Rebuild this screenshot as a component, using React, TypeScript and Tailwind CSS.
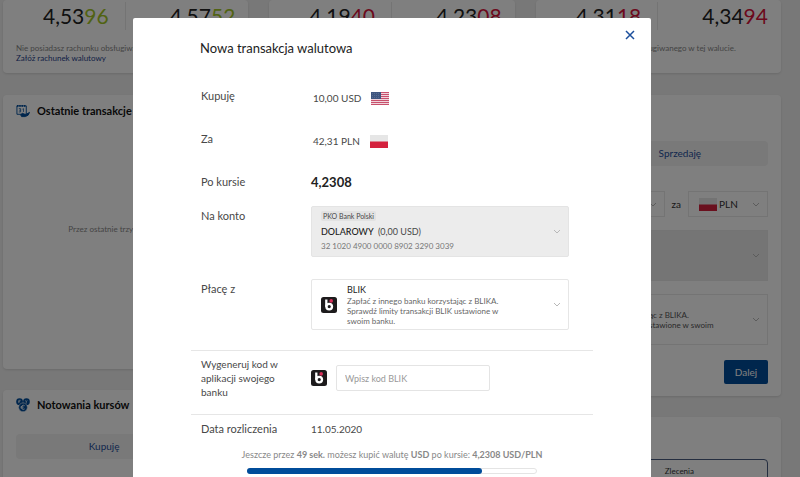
import { useState } from "react";
import type { ReactNode } from "react";

const rateCards = [
  { left: ["4,53", "96"], right: ["4,57", "52"], color: "text-[#a3c626]" },
  { left: ["4,19", "40"], right: ["4,23", "08"], color: "text-[#d8123a]" },
  { left: ["4,31", "18"], right: ["4,34", "94"], color: "text-[#d8123a]" },
];

function Chevron() {
  return (
    <svg viewBox="0 0 8 5" className="w-2 h-[5px] shrink-0" fill="none" stroke="#b8b8b8" aria-hidden="true">
      <path d="M1 1l3 3 3-3" />
    </svg>
  );
}

function FlagPl() {
  return (
    <svg viewBox="0 0 18 13" className="w-[18px] h-[13px] shrink-0" role="img" aria-label="Polska">
      <rect width="18" height="13" fill="#e6e6e6" />
      <rect y="6.5" width="18" height="6.5" fill="#d4213d" />
    </svg>
  );
}

function FlagUs() {
  return (
    <svg viewBox="0 0 18 13" className="w-[18px] h-[13px] shrink-0" role="img" aria-label="USA">
      <rect width="18" height="13" fill="#f0d3db" />
      {[0, 2, 4, 6, 8, 10, 12].map((y) => (
        <rect key={y} y={y} width="18" height="1" fill="#c8506c" />
      ))}
      <rect width="10" height="7" fill="#3f5680" />
      <path d="M1 1.5h8M1 3.5h8M1 5.5h8" stroke="#6f80a3" strokeWidth="0.5" strokeDasharray="1 1" />
    </svg>
  );
}

function BlikLogo() {
  return (
    <svg viewBox="0 0 16 16" className="size-4 shrink-0" role="img" aria-label="BLIK">
      <rect width="16" height="16" rx="2.5" fill="#1d1b1c" />
      <circle cx="8.2" cy="9.6" r="2.8" fill="none" stroke="#fff" strokeWidth="2.3" />
      <path d="M5.3 2.5v7.3" stroke="#fff" strokeWidth="2.3" />
      <circle cx="10.2" cy="3.9" r="1.8" fill="#d8315a" />
    </svg>
  );
}

function CalendarIcon() {
  return (
    <svg viewBox="0 0 15 14" className="w-3.5 h-3.5 shrink-0" fill="none" aria-hidden="true">
      <path d="M1 1.5h10v9H1z" stroke="#004c9a" />
      <path d="M1 1.5h10" stroke="#004c9a" strokeWidth="2" strokeDasharray="1.5 1" />
      <path d="M3 4.5h2v3.5H3M3.5 6.2H5M7 5l1-.5V8" stroke="#004c9a" strokeWidth="0.8" />
      <path d="M5 11l2-1.5 3 1.5 4.5-2.5-1.5 3-3 1.500H6z" fill="#004c9a" stroke="#004c9a" />
    </svg>
  );
}

function CoinsIcon() {
  return (
    <svg viewBox="0 0 15 15" className="size-3.5 shrink-0" fill="none" aria-hidden="true">
      <circle cx="3.8" cy="4" r="3.6" fill="#004c9a" />
      <circle cx="11.2" cy="4" r="3.6" fill="#004c9a" />
      <path d="M5 2.5H3v3M2.5 4h2M10 2.5l1 1.5 1-1.5M11 4v2" stroke="#fff" strokeWidth="0.7" />
      <circle cx="7.5" cy="10" r="4.7" fill="#004c9a" stroke="#fff" strokeWidth="0.6" />
      <path d="M9.300 8.300a2.200 2.200 0 1 0 0 3.400M5 9.500h3M5 10.600h3" stroke="#fff" strokeWidth="0.9" />
    </svg>
  );
}

function Card({ children, className }: { children: ReactNode; className?: string }) {
  return <section className={`bg-white rounded-sm shadow-sm px-[13px] ${className ?? ""}`}>{children}</section>;
}

function Tabs({ labels }: { labels: string[] }) {
  return (
    <div className="grid grid-cols-2 bg-[#f3f3f3] rounded-sm">
      {labels.map((label) => (
        <button key={label} type="button" className="h-[25px] text-[10px] text-[#1f4f9c]">
          {label}
        </button>
      ))}
    </div>
  );
}

function CurrencySelect({ value, label }: { value: string; label: string }) {
  return (
    <div className="relative flex-1 max-w-20 h-[26px] border border-[#e9e9e9] flex items-center gap-0.5 pl-2.5 pr-[7px]">
      {value === "PLN" ? <FlagPl /> : <FlagUs />}
      <select aria-label={label} defaultValue={value} className="appearance-none flex-1 min-w-0 text-[10px] text-[#333]">
        <option>{value}</option>
      </select>
      <Chevron />
    </div>
  );
}

function Dashboard() {
  return (
    <main className="h-screen overflow-hidden bg-[#f1f1f1] pl-[3px] pr-[19px]">
      <div className="grid grid-cols-3 gap-[21px]">
        {rateCards.map((card) => (
          <Card key={card.left[0]} className="pt-0.5 pb-2.5">
            <div className="grid grid-cols-2 divide-x divide-[#e9e9e9] text-[21px] leading-7 text-right text-[#222]">
              <p className="pr-4">
                {card.left[0]}
                <span className={card.color}>{card.left[1]}</span>
              </p>
              <p>
                {card.right[0]}
                <span className={card.color}>{card.right[1]}</span>
              </p>
            </div>
            <p className="mt-[13px] text-[8px] leading-[10px] text-[#888] whitespace-nowrap">
              Nie posiadasz rachunku obsługiwanego w tej walucie.
            </p>
            <a href="#rachunek" className="block text-[8px] leading-[10px] text-[#1f3f8c]">
              Załóż rachunek walutowy
            </a>
          </Card>
        ))}
      </div>

      <div className="mt-[22px] grid grid-cols-2 gap-[21px] items-start">
        <div className="flex flex-col gap-[21px]">
          <Card className="min-h-[274px] pt-1.5">
            <h2 className="flex items-center gap-[7px] text-[11px] leading-5 font-bold text-[#111]">
              <CalendarIcon />
              Ostatnie transakcje
            </h2>
            <p className="mt-[102px] text-center text-[8px] leading-3 text-[#888] whitespace-nowrap">
              Przez ostatnie trzy miesiące nie wykonano żadnej transakcji w serwisie.
            </p>
          </Card>
          <Card className="min-h-40 pt-[5px]">
            <h2 className="mb-[19px] flex items-center gap-[7px] text-[11px] leading-5 font-bold text-[#111]">
              <CoinsIcon />
              Notowania kursów
            </h2>
            <Tabs labels={["Kupuję", "Sprzedaję"]} />
          </Card>
        </div>

        <div className="flex flex-col gap-[21px]">
          <Card className="pt-[46px] pb-3">
            <Tabs labels={["Kupuję", "Sprzedaję"]} />
            <div className="mt-[25px] flex items-center justify-end gap-[7px] text-[10px] text-[#333]">
              <CurrencySelect value="USD" label="Waluta kupowana" />
              <span>za</span>
              <CurrencySelect value="PLN" label="Waluta płatności" />
            </div>
            <button
              type="button"
              aria-label="Wybierz konto"
              className="mt-[13px] w-full h-[51px] bg-[#ebebeb] border border-[#e8e8e8] flex items-center justify-end pr-[7px]"
            >
              <Chevron />
            </button>
            <button
              type="button"
              className="mt-[13px] w-full h-[51px] border border-[#e9e9e9] flex items-center justify-between pr-[7px] text-left"
            >
              <span className="pl-[121px] text-[8px] leading-[10px] text-[#555]">
                Zapłać z innego banku korzystając z BLIKA.
                <br />
                Sprawdź limity transakcji BLIK ustawione w swoim
              </span>
              <Chevron />
            </button>
            <div className="mt-[15px] flex justify-end">
              <button type="button" className="h-6 w-11 rounded-xs bg-[#004c9a] text-[10px] text-white">
                Dalej
              </button>
            </div>
          </Card>
          <Card className="pt-[42px]">
            <div className="grid grid-cols-2 border border-[#4a5d80] rounded-t-sm text-[8px] leading-[22px] text-[#333]">
              <button type="button">Transakcje</button>
              <button type="button">Zlecenia</button>
            </div>
          </Card>
        </div>
      </div>
    </main>
  );
}

function Row({ label, htmlFor, children }: { label: string; htmlFor?: string; children: ReactNode }) {
  return (
    <div className="flex px-2.5">
      <label htmlFor={htmlFor} className="w-[110px] shrink-0 pr-5 text-[11px] leading-5">
        {label}
      </label>
      {children}
    </div>
  );
}

export default function App() {
  const [code, setCode] = useState("");
  const secondsLeft = 49;
  const secondsTotal = 60;

  return (
    <div className="relative font-[Lato,sans-serif]">
      <Dashboard />
      <div className="fixed inset-0 overflow-hidden bg-black/50 pt-[18px] pr-4">
        <div
          role="dialog"
          aria-modal="true"
          aria-labelledby="dialog-title"
          className="relative mx-auto w-full max-w-[518px] min-h-screen rounded-t-xs bg-white px-[58px] pt-5 text-[#484848]"
        >
          <button type="button" aria-label="Zamknij" className="absolute top-3 right-4">
            <svg viewBox="0 0 10 10" className="size-2.5" stroke="#1c4f9c" strokeWidth="1.5" aria-hidden="true">
              <path d="M1 1l8 8M9 1L1 9" />
            </svg>
          </button>
          <h1 id="dialog-title" className="pl-[9px] text-[13px] leading-5 text-[#222]">
            Nowa transakcja walutowa
          </h1>

          <div className="mt-7 flex flex-col gap-[21px]">
            <Row label="Kupuję">
              <p className="flex items-center gap-2.5 pt-0.5 pl-0.5 text-[10px] leading-5">
                10,00 USD <FlagUs />
              </p>
            </Row>
            <Row label="Za">
              <p className="flex items-center gap-2.5 pt-0.5 pl-0.5 text-[10px] leading-5">
                42,31 PLN <FlagPl />
              </p>
            </Row>
            <Row label="Po kursie">
              <p className="text-[13px] leading-5 font-bold text-[#222]">4,2308</p>
            </Row>
          </div>

          <div className="mt-3.5 flex flex-col gap-[22px]">
            <Row label="Na konto" htmlFor="account">
              <button
                id="account"
                type="button"
                aria-haspopup="listbox"
                className="w-[258px] h-[51px] rounded-xs border border-[#e4e4e4] bg-[#ececec] pl-[9px] pr-[7px] flex items-center justify-between text-left"
              >
                <span className="flex flex-col items-start">
                  <span className="rounded-xs bg-[#e2e2e2] px-0.5 text-[7px] leading-[10px]">PKO Bank Polski</span>
                  <span className="mt-1 text-[9px] leading-[14px]">
                    <span className="mr-0.5 font-medium text-[#222]">DOLAROWY</span> (0,00 USD)
                  </span>
                  <span className="text-[8px] leading-[14px] text-[#777]">32 1020 4900 0000 8902 3290 3039</span>
                </span>
                <Chevron />
              </button>
            </Row>
            <Row label="Płacę z" htmlFor="source">
              <button
                id="source"
                type="button"
                aria-haspopup="listbox"
                className="w-[258px] h-[51px] rounded-xs border border-[#e6e6e6] pl-[9px] pr-[7px] flex items-center text-left"
              >
                <BlikLogo />
                <span className="ml-2.5 flex-1 text-[8px] leading-[10px] text-[#666]">
                  <span className="block text-[9px] leading-3 text-[#222]">BLIK</span>
                  Zapłać z innego banku korzystając z BLIKA.
                  <br />
                  Sprawdź limity transakcji BLIK ustawione w<br />
                  swoim banku.
                </span>
                <Chevron />
              </button>
            </Row>
          </div>

          <div className="mt-5 flex items-center border-y border-[#e6e6e6] px-2.5 pt-1.5 pb-[15px]">
            <label htmlFor="blik-code" className="w-[110px] shrink-0 pr-5 text-[10px] leading-[14px]">
              Wygeneruj kod w aplikacji swojego banku
            </label>
            <BlikLogo />
            <input
              id="blik-code"
              value={code}
              onChange={(e) => setCode(e.target.value)}
              placeholder="Wpisz kod BLIK"
              className="ml-[9px] w-[154px] h-[26px] rounded-xs border border-[#e4e4e4] px-2 text-[9px] placeholder:text-[#999]"
            />
          </div>

          <div className="mt-1">
            <Row label="Data rozliczenia">
              <p className="text-[10px] leading-5">11.05.2020</p>
            </Row>
          </div>

          <p className="mt-2.5 text-center text-[9px] leading-3 text-[#888] whitespace-nowrap">
            Jeszcze przez <b>{secondsLeft} sek.</b> możesz kupić walutę <b>USD</b> po kursie: <b>4,2308 USD/PLN</b>
          </p>
          <div
            role="progressbar"
            aria-label="Pozostały czas"
            aria-valuenow={secondsLeft}
            aria-valuemax={secondsTotal}
            className="mx-auto mt-[7px] w-[290px] h-1.5 rounded-full border border-[#e4e4e4]"
          >
            <div
              className="-mt-px -ml-px h-1.5 rounded-full bg-[#004c9a]"
              style={{ width: `${(secondsLeft / secondsTotal) * 100}%` }}
            />
          </div>
        </div>
      </div>
    </div>
  );
}
